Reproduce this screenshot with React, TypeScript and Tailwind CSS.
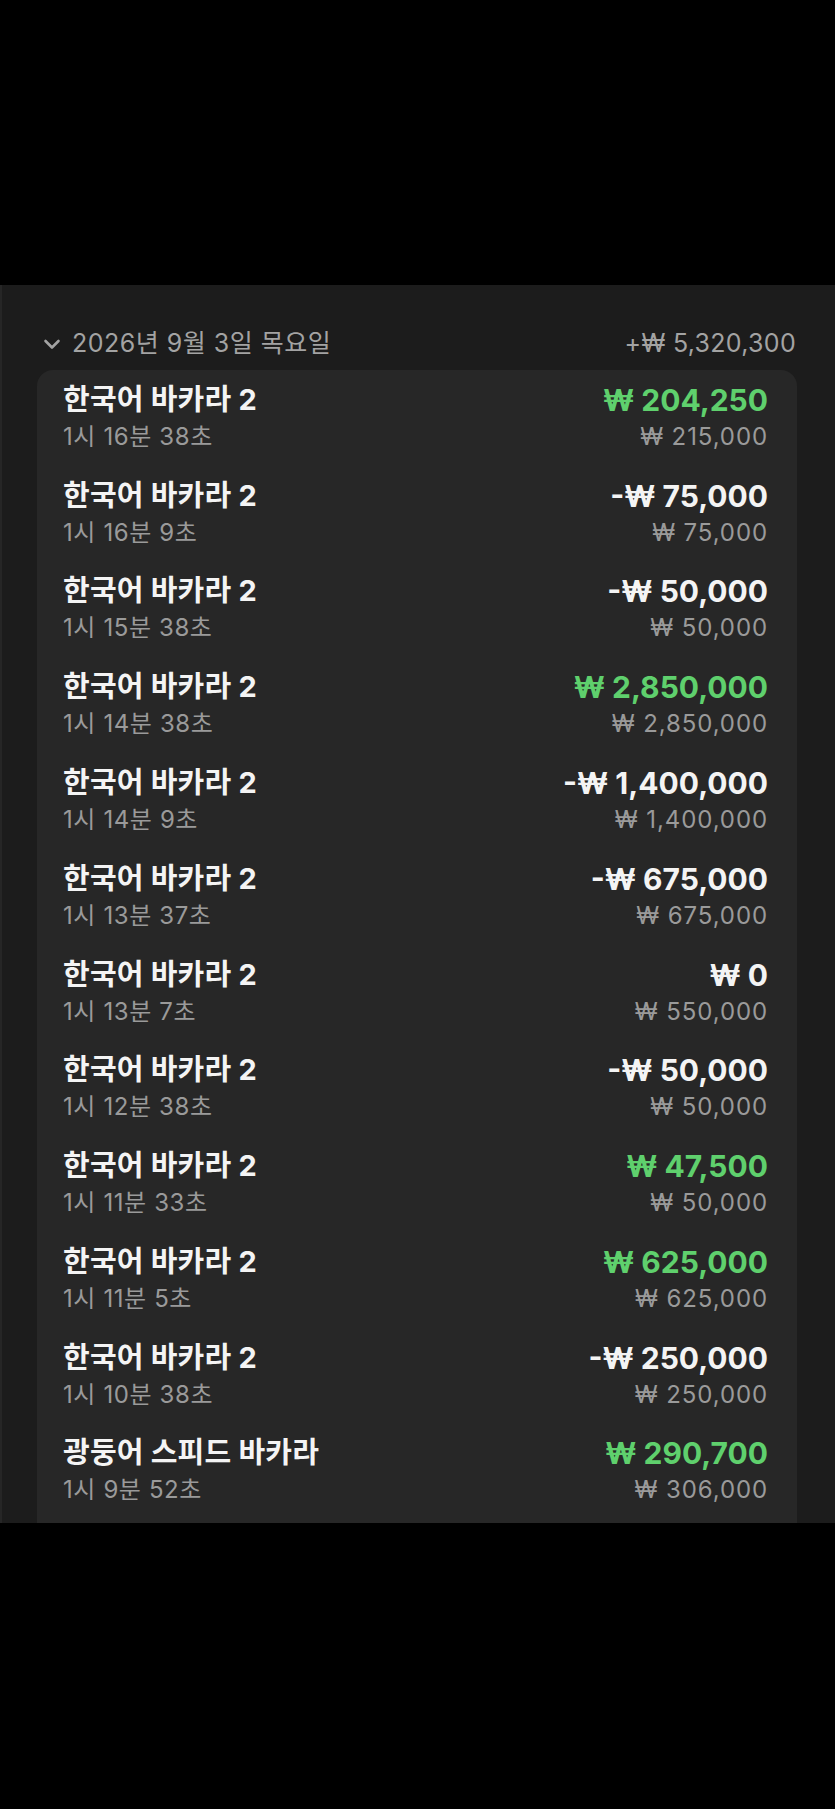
import React from 'react';

interface Bet {
  game: string;
  time: string;
  result: string;
  stake: string;
  win?: boolean;
}

const bets: Bet[] = [
  { game: '한국어 바카라 2', time: '1시 16분 38초', result: '₩ 204,250', stake: '₩ 215,000', win: true },
  { game: '한국어 바카라 2', time: '1시 16분 9초', result: '-₩ 75,000', stake: '₩ 75,000' },
  { game: '한국어 바카라 2', time: '1시 15분 38초', result: '-₩ 50,000', stake: '₩ 50,000' },
  { game: '한국어 바카라 2', time: '1시 14분 38초', result: '₩ 2,850,000', stake: '₩ 2,850,000', win: true },
  { game: '한국어 바카라 2', time: '1시 14분 9초', result: '-₩ 1,400,000', stake: '₩ 1,400,000' },
  { game: '한국어 바카라 2', time: '1시 13분 37초', result: '-₩ 675,000', stake: '₩ 675,000' },
  { game: '한국어 바카라 2', time: '1시 13분 7초', result: '₩ 0', stake: '₩ 550,000' },
  { game: '한국어 바카라 2', time: '1시 12분 38초', result: '-₩ 50,000', stake: '₩ 50,000' },
  { game: '한국어 바카라 2', time: '1시 11분 33초', result: '₩ 47,500', stake: '₩ 50,000', win: true },
  { game: '한국어 바카라 2', time: '1시 11분 5초', result: '₩ 625,000', stake: '₩ 625,000', win: true },
  { game: '한국어 바카라 2', time: '1시 10분 38초', result: '-₩ 250,000', stake: '₩ 250,000' },
  { game: '광둥어 스피드 바카라', time: '1시 9분 52초', result: '₩ 290,700', stake: '₩ 306,000', win: true },
];

function ChevronDown() {
  return (
    <svg width="20" height="20" viewBox="0 0 20 20" fill="none" className="shrink-0">
      <path d="M3.5 7l6.5 6.5L16.5 7" stroke="#a3a3a3" strokeWidth="2.6" strokeLinecap="round" strokeLinejoin="round" />
    </svg>
  );
}

function BetRow({ bet }: { bet: Bet }) {
  return (
    <div className="flex items-start justify-between pl-[26px] pr-[29px] py-[10.9px]">
      <div className="flex flex-col">
        <span className="text-[29px] leading-[36px] font-bold text-[#f4f4f4] tracking-[0.2px]">{bet.game}</span>
        <span className="text-[24px] leading-[38px] text-[#9a9a9a] tracking-[0.6px]">{bet.time}</span>
      </div>
      <div className="flex flex-col items-end">
        <span className={`text-[30px] leading-[36px] font-bold ${bet.win ? 'text-[#5fd06d]' : 'text-[#f4f4f4]'}`}>
          {bet.result}
        </span>
        <span className="text-[24px] leading-[38px] text-[#9a9a9a] tracking-[0.9px]">{bet.stake}</span>
      </div>
    </div>
  );
}

export default function App() {
  return (
    <div className="w-[835px] h-[1809px] bg-black font-[Inter,'Noto_Sans_CJK_KR',sans-serif]">
      <div className="h-[285px]" />
      <div className="h-[1238px] overflow-hidden bg-[#1c1c1c] border-l-2 border-[#262626] pl-[35px] pr-[38px]">
        <div className="flex items-center justify-between h-[40px] mt-[39px] mb-[6px] pl-[5px] pr-[1px]">
          <div className="flex items-center gap-[10px]">
            <ChevronDown />
            <span className="text-[25px] text-[#a3a3a3] tracking-[0.5px]">2026년 9월 3일 목요일</span>
          </div>
          <span className="text-[25px] text-[#a3a3a3] tracking-[0.3px]">+₩ 5,320,300</span>
        </div>
        <div className="bg-[#272727] rounded-[16px] pt-[1px] pb-[40px]">
          {bets.map((bet, i) => (
            <BetRow key={i} bet={bet} />
          ))}
        </div>
      </div>
    </div>
  );
}
